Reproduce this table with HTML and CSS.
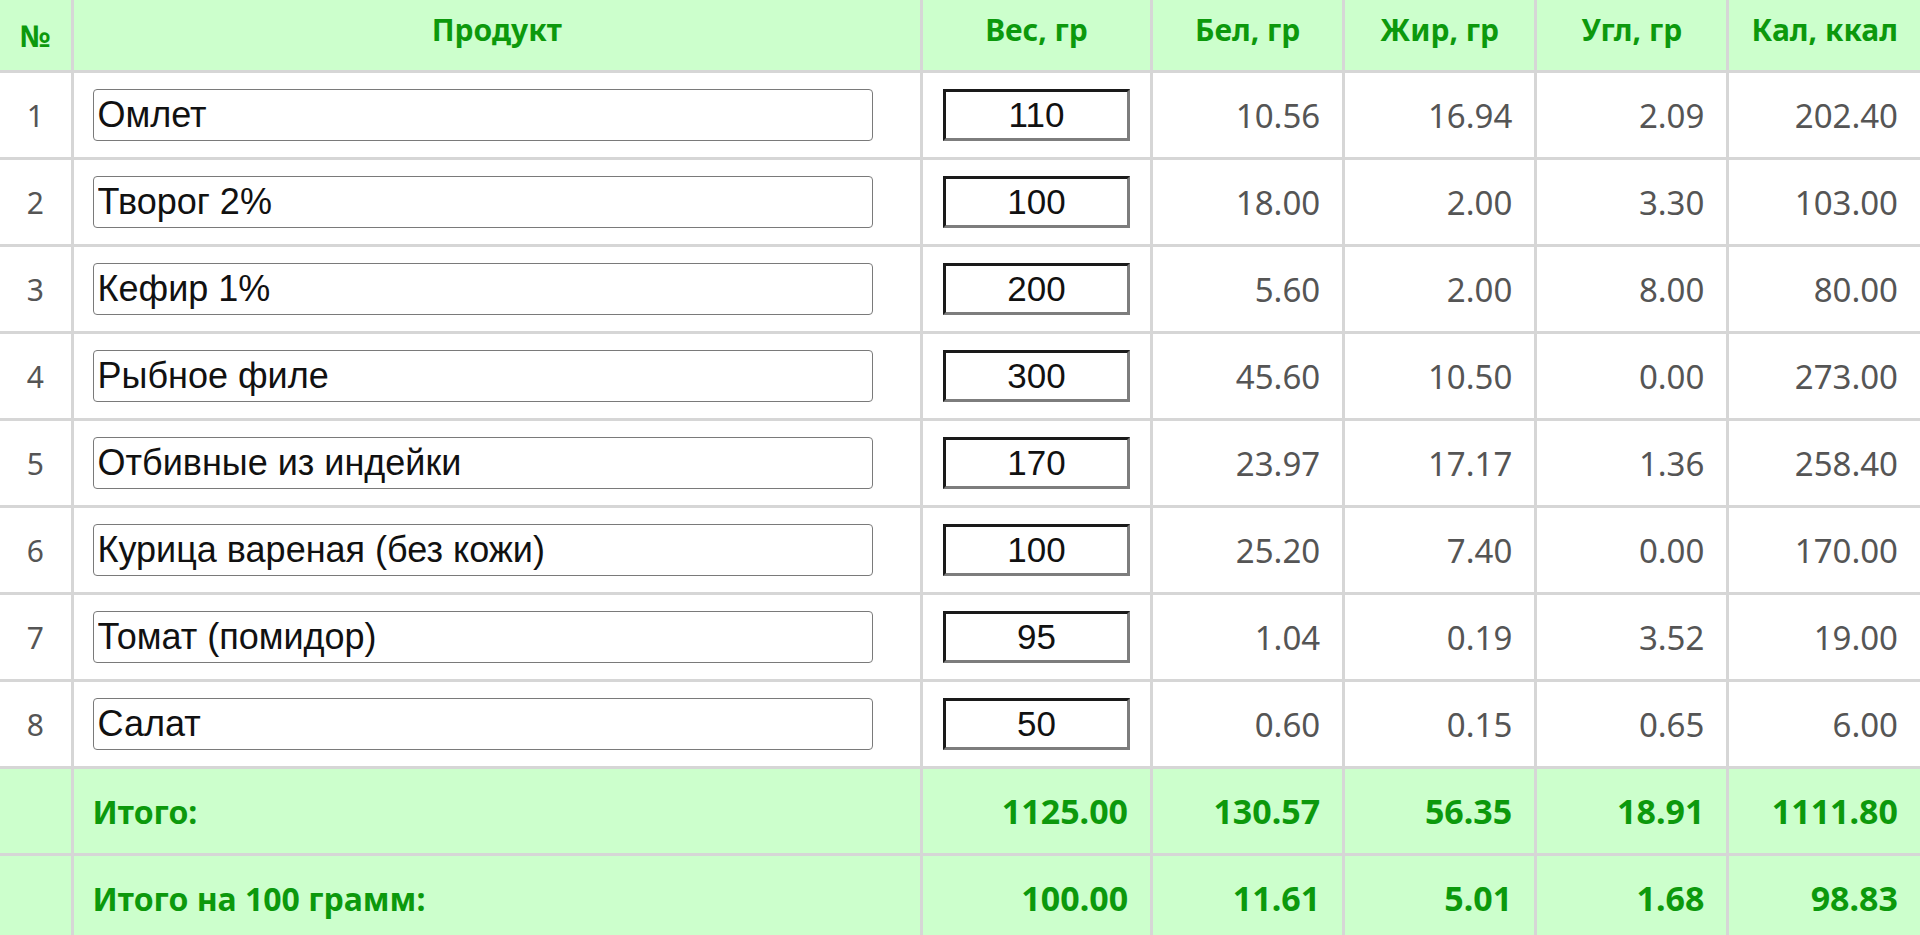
FILE: index.html
```html
<!DOCTYPE html>
<html lang="ru">
<head>
  <meta charset="UTF-8" />
  <meta name="viewport" content="width=device-width, initial-scale=1.0"/>
  <title>Калькулятор калорий</title>
  <link rel="stylesheet" href="styles.css">
</head>
<body>
  <table class="calc">
    <colgroup>
      <col class="c-num">
      <col class="c-prod">
      <col class="c-weight">
      <col class="c-val">
      <col class="c-val">
      <col class="c-val">
      <col class="c-val">
    </colgroup>
    <thead>
      <tr>
        <th>№</th>
        <th>Продукт</th>
        <th>Вес, гр</th>
        <th>Бел, гр</th>
        <th>Жир, гр</th>
        <th>Угл, гр</th>
        <th>Кал, ккал</th>
      </tr>
    </thead>
    <tbody>
      <tr>
        <td class="num">1</td>
        <td class="prod"><input class="product" type="text" value="Омлет"></td>
        <td class="wt"><input class="weight" type="text" value="110"></td>
        <td>10.56</td><td>16.94</td><td>2.09</td><td>202.40</td>
      </tr>
      <tr>
        <td class="num">2</td>
        <td class="prod"><input class="product" type="text" value="Творог 2%"></td>
        <td class="wt"><input class="weight" type="text" value="100"></td>
        <td>18.00</td><td>2.00</td><td>3.30</td><td>103.00</td>
      </tr>
      <tr>
        <td class="num">3</td>
        <td class="prod"><input class="product" type="text" value="Кефир 1%"></td>
        <td class="wt"><input class="weight" type="text" value="200"></td>
        <td>5.60</td><td>2.00</td><td>8.00</td><td>80.00</td>
      </tr>
      <tr>
        <td class="num">4</td>
        <td class="prod"><input class="product" type="text" value="Рыбное филе"></td>
        <td class="wt"><input class="weight" type="text" value="300"></td>
        <td>45.60</td><td>10.50</td><td>0.00</td><td>273.00</td>
      </tr>
      <tr>
        <td class="num">5</td>
        <td class="prod"><input class="product" type="text" value="Отбивные из индейки"></td>
        <td class="wt"><input class="weight" type="text" value="170"></td>
        <td>23.97</td><td>17.17</td><td>1.36</td><td>258.40</td>
      </tr>
      <tr>
        <td class="num">6</td>
        <td class="prod"><input class="product" type="text" value="Курица вареная (без кожи)"></td>
        <td class="wt"><input class="weight" type="text" value="100"></td>
        <td>25.20</td><td>7.40</td><td>0.00</td><td>170.00</td>
      </tr>
      <tr>
        <td class="num">7</td>
        <td class="prod"><input class="product" type="text" value="Томат (помидор)"></td>
        <td class="wt"><input class="weight" type="text" value="95"></td>
        <td>1.04</td><td>0.19</td><td>3.52</td><td>19.00</td>
      </tr>
      <tr>
        <td class="num">8</td>
        <td class="prod"><input class="product" type="text" value="Салат"></td>
        <td class="wt"><input class="weight" type="text" value="50"></td>
        <td>0.60</td><td>0.15</td><td>0.65</td><td>6.00</td>
      </tr>
    </tbody>
    <tfoot>
      <tr>
        <td></td>
        <td class="label">Итого:</td>
        <td>1125.00</td><td>130.57</td><td>56.35</td><td>18.91</td><td>1111.80</td>
      </tr>
      <tr>
        <td></td>
        <td class="label">Итого на 100 грамм:</td>
        <td>100.00</td><td>11.61</td><td>5.01</td><td>1.68</td><td>98.83</td>
      </tr>
    </tfoot>
  </table>
</body>
</html>
```

FILE: styles.css
```css
body {
  margin: 0;
  padding: 0;
  background-color: #fff;
  font-family: 'Noto Sans', sans-serif;
  overflow: hidden;
}

.calc {
  width: 1920px;
  table-layout: fixed;
  border-collapse: collapse;
}

.c-num { width: 72px; }
.c-prod { width: 849px; }
.c-weight { width: 230px; }
.c-val { width: 192px; }

.calc th,
.calc td {
  border: 3px solid #d6d6d6;
  padding: 0 22px;
  font-size: 33px;
  text-align: right;
  white-space: nowrap;
}

.calc tr > :first-child {
  border-left: none;
  padding: 0;
  text-align: center;
}

.calc tr > :last-child {
  border-right: none;
}

.calc thead th {
  border-top: none;
  height: 58px;
  padding: 0 4px 12px;
  background-color: #ccffcc;
  color: #0c990c;
  font-weight: bold;
  font-size: 30px;
  text-align: center;
}

.calc tbody tr {
  height: 87px;
}

.calc tbody td {
  color: #555;
}

.calc tbody .num {
  font-size: 30px;
}

.calc tbody .prod {
  padding-left: 19px;
}

.calc tbody .wt {
  padding: 0 20px;
}

.calc tfoot tr {
  height: 87px;
}

.calc tfoot td {
  background-color: #ccffcc;
  color: #0c990c;
  font-weight: bold;
  font-size: 34px;
}

.calc tfoot .label {
  padding-left: 19px;
  font-size: 32px;
  text-align: left;
}

.product {
  box-sizing: border-box;
  width: 780px;
  height: 52px;
  display: block;
  border: 1px solid #7a7a7a;
  border-radius: 4px;
  padding: 0 4px;
  font-family: 'Liberation Sans', Arial, sans-serif;
  font-size: 36px;
  color: #111;
  background: #fff;
}

.weight {
  box-sizing: border-box;
  width: 100%;
  height: 52px;
  display: block;
  border: 3px solid;
  border-color: #1a1a1a #7d7d7d #7d7d7d #1a1a1a;
  padding: 0;
  font-family: 'Liberation Sans', Arial, sans-serif;
  font-size: 35px;
  color: #111;
  text-align: center;
  background: #fff;
}
```
